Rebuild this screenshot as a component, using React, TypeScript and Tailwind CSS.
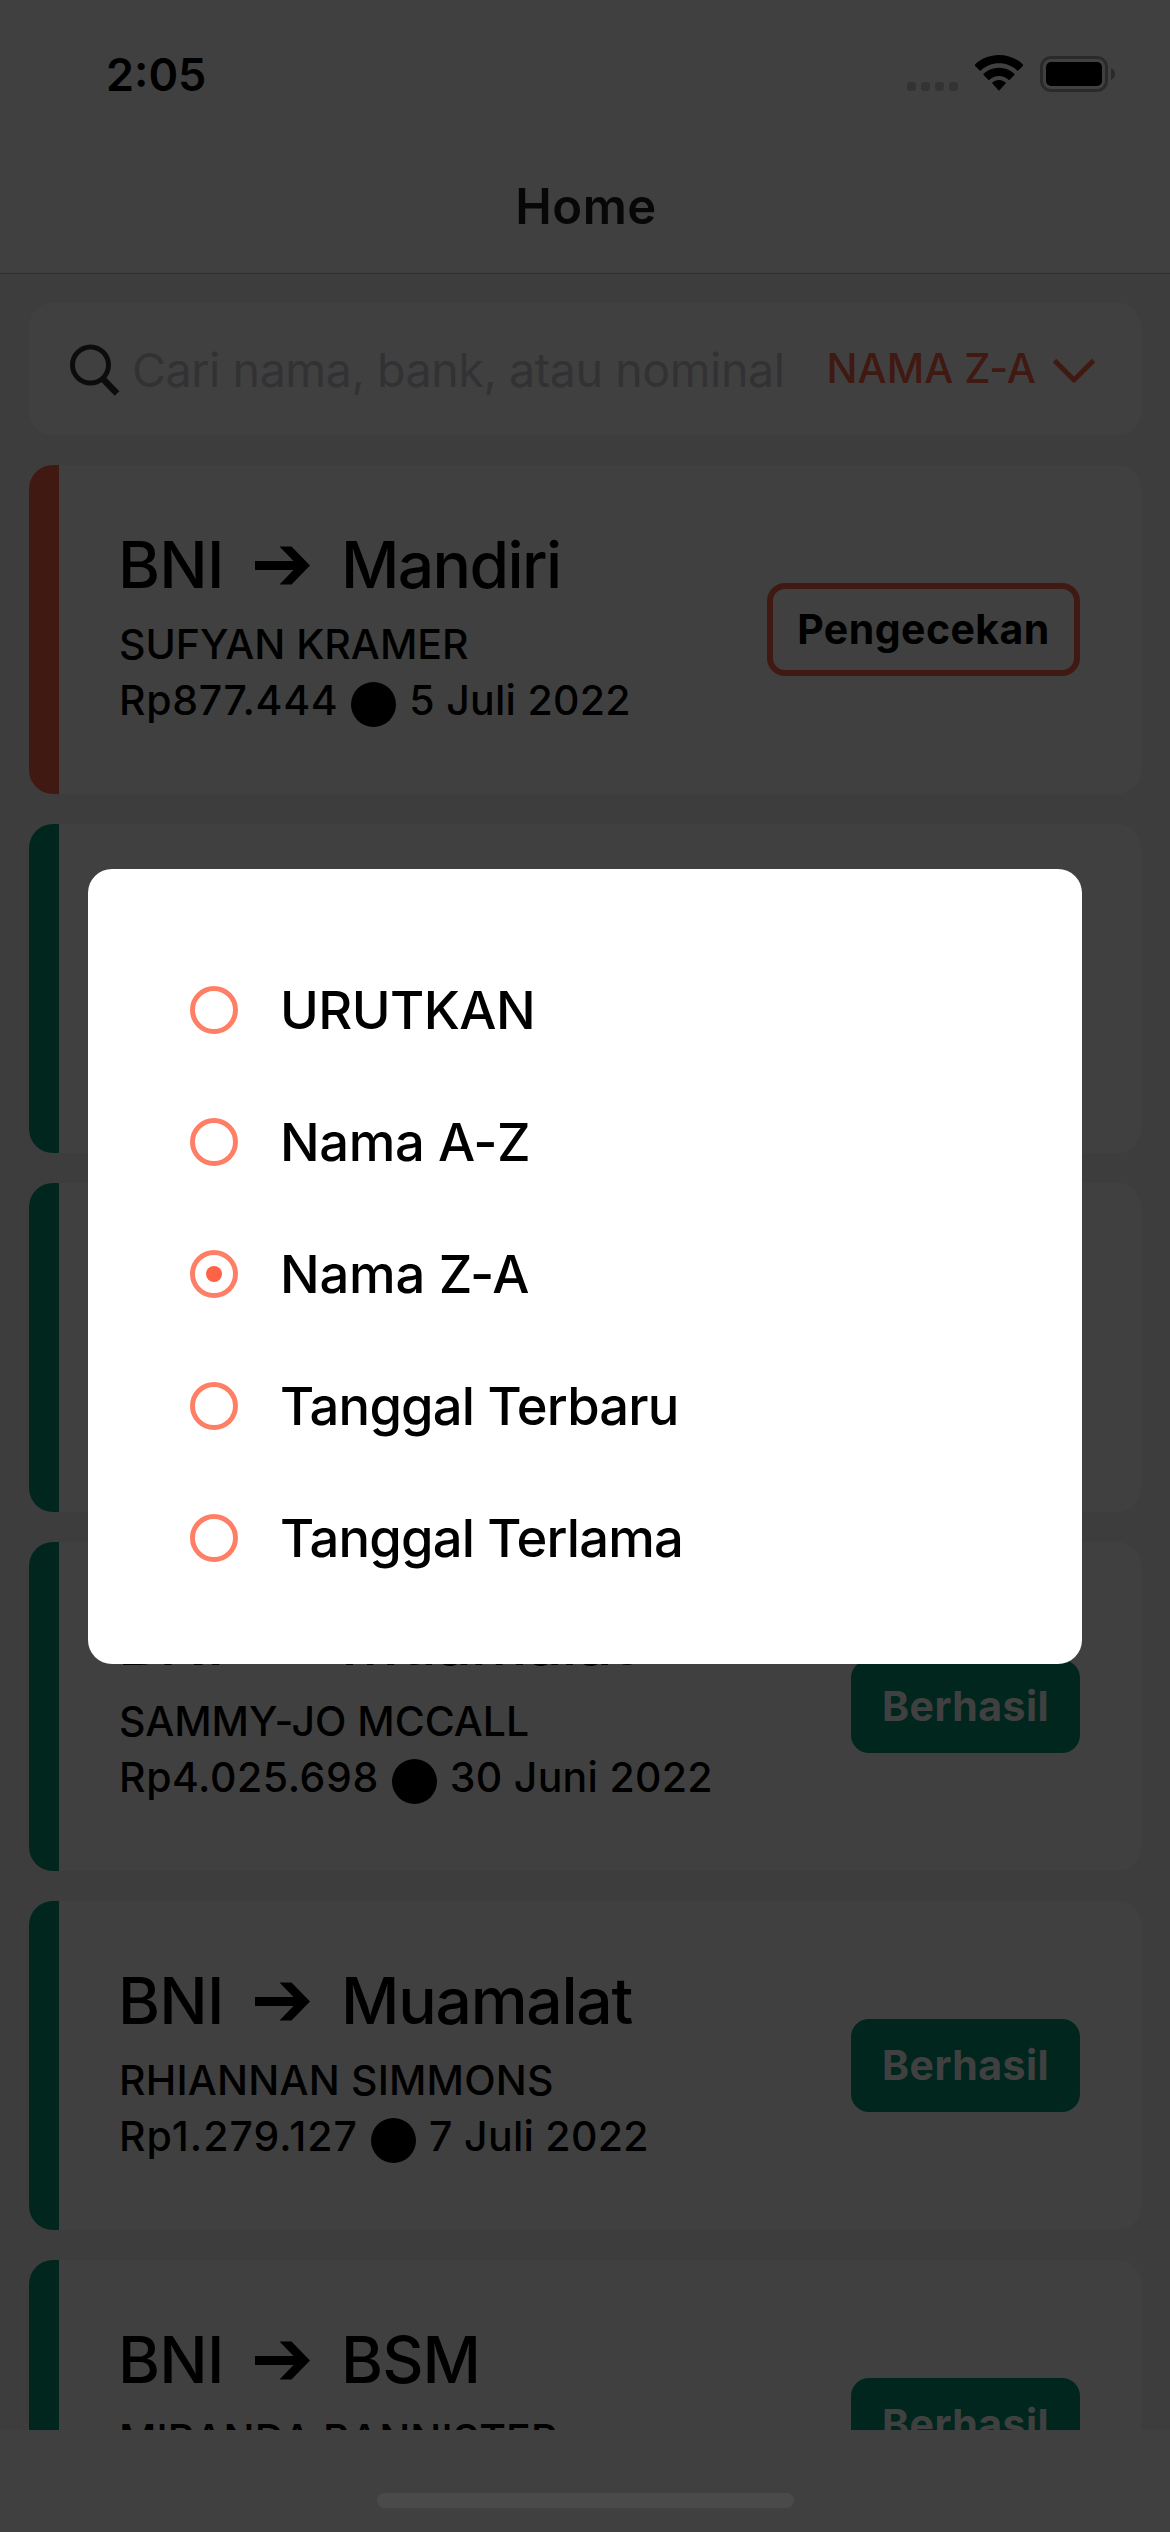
type Transfer = {
  from: string;
  to: string;
  toTracking: string;
  name: string;
  nameTracking: string;
  amount?: string;
  amountTracking?: string;
  date?: string;
  pending?: boolean;
};

const transfers: (Transfer | null)[] = [
  { from: "BNI", to: "Mandiri", toTracking: "tracking-[-1.6px]", name: "SUFYAN KRAMER", nameTracking: "tracking-[-0.04px]", amount: "Rp877.444", amountTracking: "tracking-[0.65px]", date: "5 Juli 2022", pending: true },
  null,
  null,
  { from: "BNI", to: "Muamalat", toTracking: "tracking-[-1.2px]", name: "SAMMY-JO MCCALL", nameTracking: "tracking-[-0.05px]", amount: "Rp4.025.698", amountTracking: "tracking-[0.56px]", date: "30 Juni 2022" },
  { from: "BNI", to: "Muamalat", toTracking: "tracking-[-1.2px]", name: "RHIANNAN SIMMONS", nameTracking: "tracking-[0.18px]", amount: "Rp1.279.127", amountTracking: "tracking-[1.05px]", date: "7 Juli 2022" },
  { from: "BNI", to: "BSM", toTracking: "tracking-[-0.9px]", name: "MIRANDA BANNISTER", nameTracking: "tracking-[0.09px]" },
];

const sortOptions = [
  { label: "URUTKAN", tracking: "tracking-[-0.55px]" },
  { label: "Nama A-Z", tracking: "tracking-[-0.38px]" },
  { label: "Nama Z-A", tracking: "tracking-[-0.25px]" },
  { label: "Tanggal Terbaru", tracking: "tracking-[-0.81px]" },
  { label: "Tanggal Terlama", tracking: "tracking-[-0.84px]" },
];

function StatusBar() {
  return (
    <div className="flex h-[141px] shrink-0 items-start justify-between pl-[106px] pr-[55px]">
      <span className="mt-[47px] text-[45px] font-semibold leading-[56px]">2:05</span>
      <div className="mt-[55px] flex">
        <div className="mr-[17px] mt-[27px] flex gap-[5px]">
          {[0, 1, 2, 3].map((i) => (
            <span key={i} className="size-[9px] rounded-[3px] bg-[#cccccc]" />
          ))}
        </div>
        <svg className="mr-[17px] h-9 w-12" viewBox="0 0 48 36" fill="black">
          <path d="M24 0C33.2 0 41.7 3.5 48 9.4c.4.4.4.9 0 1.300L43.300 15.500c-.3.300-.8.300-1.100 0C37.400 11 31 8.300 24 8.300S10.600 11 5.800 15.500c-.3.300-.8.300-1.100 0L0 10.700c-.4-.4-.4-.9 0-1.300C6.300 3.500 14.800 0 24 0Z" />
          <path d="M24 12.800c5.900 0 11.300 2.200 15.400 5.900.4.300.4.900 0 1.200l-4.700 4.800c-.3.300-.8.300-1.100 0-2.600-2.300-6-3.700-9.600-3.700s-7 1.400-9.600 3.700c-.3.300-.8.300-1.100 0l-4.700-4.800c-.4-.3-.4-.9 0-1.200 4.100-3.700 9.500-5.900 15.400-5.900Z" />
          <path d="M24 25c2.500 0 4.800.9 6.600 2.400.4.300.4.800 0 1.200l-6.100 6.600c-.3.300-.7.300-1 0l-6.100-6.600c-.4-.4-.4-.9 0-1.200C19.200 25.900 21.500 25 24 25Z" />
        </svg>
        <div className="mt-px flex items-center">
          <div className="h-9 w-[68px] rounded-[11px] border-[3px] border-[#a6a6a6] p-[3px]">
            <div className="size-full rounded-[5px] bg-black" />
          </div>
          <svg className="ml-[3px] h-3 w-1" viewBox="0 0 4 12" fill="#a6a6a6">
            <path d="M0 0C2.400 1 4 3.300 4 6S2.400 11 0 12Z" />
          </svg>
        </div>
      </div>
    </div>
  );
}

function SearchBar() {
  return (
    <div className="flex h-[132px] shrink-0 items-center rounded-3xl bg-white pl-10 pr-[45px]">
      <svg className="mt-px h-[52px] w-[52px] shrink-0" viewBox="0 0 52 52" fill="none" stroke="#333333">
        <circle cx="21.500" cy="21" r="18" strokeWidth="5" />
        <path d="M34 35L48 49.500" strokeWidth="6.500" />
      </svg>
      <span className="ml-[11px] mt-[2px] whitespace-nowrap text-[46.6px] leading-[60px] tracking-[-0.46px] text-[#c7c7cd]">
        Cari nama, bank, atau nominal
      </span>
      <span className="-mt-[2px] ml-auto whitespace-nowrap text-[41px] font-medium leading-[56px] tracking-[0.1px] text-[#ff6347]">NAMA Z-A</span>
      <svg className="ml-4 mt-1 h-[26px] w-11 shrink-0" viewBox="0 0 44 26" fill="none" stroke="#ff6347" strokeWidth="5">
        <path d="M2.500 2.500L22 22L41.500 2.500" strokeLinejoin="round" />
      </svg>
    </div>
  );
}

function StatusBadge({ pending }: { pending?: boolean }) {
  if (pending) {
    return (
      <span className="flex h-[93px] w-[313px] items-center justify-center rounded-[18px] border-[6px] border-[#ff6347] text-[41px] font-bold tracking-[0.45px]">
        Pengecekan
      </span>
    );
  }
  return (
    <span className="flex h-[93px] w-[229px] items-center justify-center rounded-[18px] bg-[#009874] text-[41px] font-bold tracking-[0.45px] text-white">
      Berhasil
    </span>
  );
}

function TransferCard({ item }: { item: Transfer | null }) {
  return (
    <div className="flex h-[329px] shrink-0 overflow-hidden rounded-3xl bg-white">
      <div className={item?.pending ? "w-[30px] bg-[#ff6347]" : "w-[30px] bg-[#009874]"} />
      {item && (
        <div className="flex flex-1 items-start justify-between pl-[60px] pr-[61px]">
          <div className="whitespace-nowrap pt-[60px] text-[41px] font-medium leading-[56px]">
            <div className="-ml-px mb-[11px] flex h-20 items-center text-[64px] leading-[80px]">
              <span className="w-[137px] tracking-[-0.7px]">{item.from}</span>
              <svg className="mr-[31px] mt-px h-[39px] w-[55px]" viewBox="0 0 55 39" fill="black">
                <path d="M24.500 0.500H36.500L55 19.500L36.500 38.500H24.500L38.500 24H0V15H38.500Z" />
              </svg>
              <span className={item.toTracking}>{item.to}</span>
            </div>
            <p className={item.nameTracking}>{item.name}</p>
            {item.amount && (
              <div className="flex items-center">
                <span className={item.amountTracking}>{item.amount}</span>
                <span className="ml-[13px] mr-[13px] mt-[9px] size-[45px] rounded-full bg-black" />
                <span className="tracking-[0.3px]">{item.date}</span>
              </div>
            )}
          </div>
          <div className="pt-[118px]">
            <StatusBadge pending={item.pending} />
          </div>
        </div>
      )}
    </div>
  );
}

function Radio({ checked }: { checked: boolean }) {
  return (
    <svg className="size-[50px]" viewBox="0 0 50 50">
      <circle cx="25" cy="25" r="21.500" fill="none" stroke="#ff7f66" strokeWidth="5" />
      {checked && <circle cx="25" cy="25" r="8" fill="#ff6347" />}
    </svg>
  );
}

function SortModal() {
  return (
    <div className="absolute inset-0 flex items-center justify-center bg-black/75">
      <div className="flex h-[795px] w-[994px] flex-col rounded-3xl bg-white pl-[101px] pt-[75px]">
        {sortOptions.map((o) => (
          <div key={o.label} className="flex h-[132px] items-center">
            <Radio checked={o.label === "Nama Z-A"} />
            <span className="ml-[41px] text-[52.5px] font-medium leading-[64px]">
              <span className={o.tracking}>{o.label}</span>
            </span>
          </div>
        ))}
      </div>
    </div>
  );
}

export default function App() {
  return (
    <div className="relative flex h-[2532px] w-[1170px] flex-col overflow-hidden bg-white font-['Inter',sans-serif] text-black">
      <StatusBar />
      <div className="flex h-[133px] shrink-0 items-center justify-center border-b border-[#b3b3b3] pl-[2px] text-[49px] font-semibold tracking-[0.5px] text-[#1c1c1e]">
        Home
      </div>
      <div className="flex h-[2156px] shrink-0 flex-col gap-[30px] overflow-hidden bg-[#f2f2f2] px-[29px] pt-[29px]">
        <SearchBar />
        {transfers.map((t, i) => (
          <TransferCard key={i} item={t} />
        ))}
      </div>
      <SortModal />
      <div className="absolute bottom-6 left-[377px] h-[15px] w-[417px] rounded-full bg-[#4a4a4a]" />
    </div>
  );
}
